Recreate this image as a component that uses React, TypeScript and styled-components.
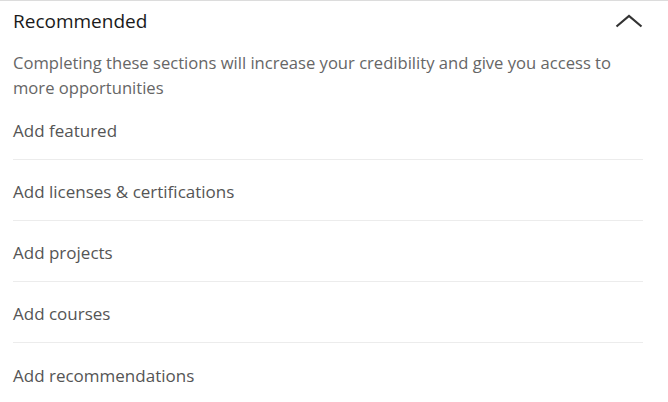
import React from 'react';
import styled, {createGlobalStyle} from 'styled-components';

const fontFamily = `"Segoe UI", "Open Sans", "Liberation Sans", sans-serif`;

const GlobalStyle = createGlobalStyle`
	html, body {
		margin: 0;
		padding: 0;
		background: #ffffff;
	}
	body {
		font-family: ${fontFamily};
	}
`;

const Section = styled.section`
	width: 668px;
	height: 402px;
	box-sizing: border-box;
	border-top: 1px solid #dcdcdc;
	padding: 0 25px 0 13px;
	background: #ffffff;
	overflow: hidden;
`;

const Header = styled.div`
	display: flex;
	align-items: center;
	justify-content: space-between;
	height: 40px;
`;

const Title = styled.h2`
	margin: 0;
	font-family: ${fontFamily};
	font-size: 19px;
	font-weight: 400;
	color: #1a1a1a;
`;

const Toggle = styled.button`
	display: flex;
	align-items: center;
	justify-content: center;
	width: 30px;
	height: 24px;
	padding: 0;
	margin-right: -1px;
	border: none;
	background: transparent;
	cursor: pointer;
`;

const Description = styled.p`
	margin: 9px 0 0;
	font-family: ${fontFamily};
	font-size: 16.6px;
	line-height: 25px;
	color: #666666;
`;

const List = styled.ul`
	list-style: none;
	margin: -1px 0 0;
	padding: 0;
`;

const Item = styled.li<{$last?: boolean}>`
	display: flex;
	align-items: center;
	height: 61px;
	padding-top: 3px;
	box-sizing: border-box;
	border-bottom: ${(p) => (p.$last ? 'none' : '1px solid #ececec')};
	font-family: ${fontFamily};
	font-size: 17px;
	color: #555555;
`;

const items = [
	'Add featured',
	'Add licenses & certifications',
	'Add projects',
	'Add courses',
	'Add recommendations',
];

export default function App() {
	return (
		<>
			<GlobalStyle />
			<Section>
				<Header>
					<Title>Recommended</Title>
					<Toggle aria-label="Collapse">
						<svg width="28" height="14" viewBox="0 0 28 14" fill="none">
							<path d="M1.5 12.5 L14 2 L26.5 12.5" stroke="#333333" strokeWidth="2.2" />
						</svg>
					</Toggle>
				</Header>
				<Description>
					Completing these sections will increase your credibility and give you access to
					more opportunities
				</Description>
				<List>
					{items.map((label, i) => (
						<Item key={label} $last={i === items.length - 1}>
							{label}
						</Item>
					))}
				</List>
			</Section>
		</>
	);
}
